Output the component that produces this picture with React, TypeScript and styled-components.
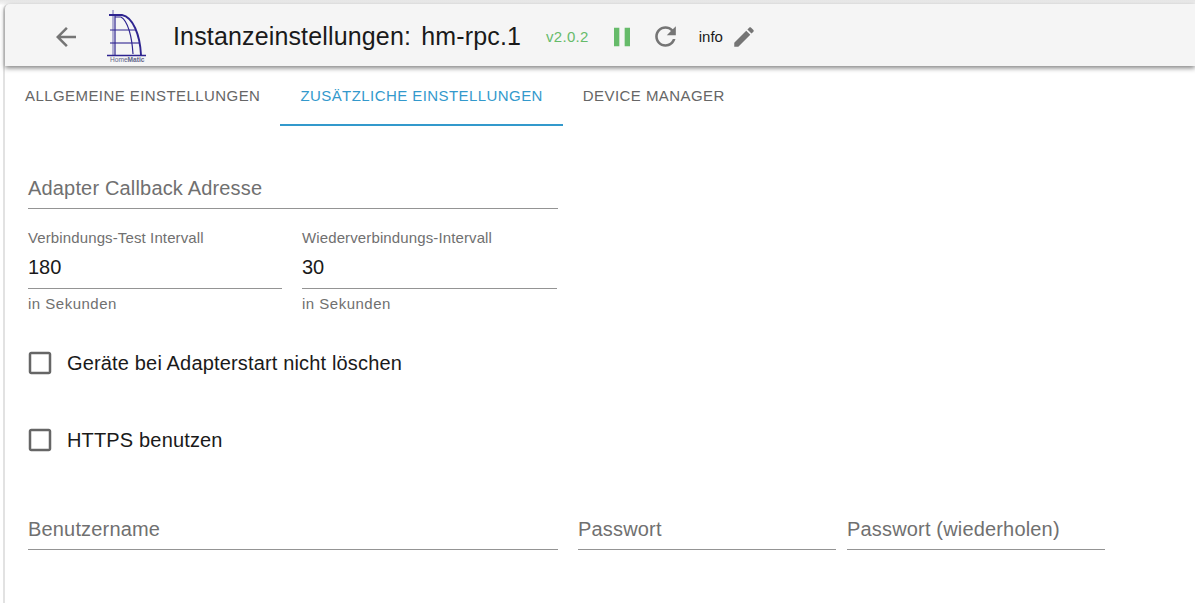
import styled, { createGlobalStyle } from "styled-components";
import { useState } from "react";

const GlobalStyle = createGlobalStyle`
    html, body {
        margin: 0;
        height: 100%;
        background: #ffffff;
        overflow: hidden;
    }
    body {
        font-family: "Liberation Sans", Arial, sans-serif;
    }
`;

const Frame = styled.div`
    width: 1195px;
    height: 603px;
    box-sizing: border-box;
    padding: 4px 0 0 3px;
    background: linear-gradient(#e6e6e6, #f4f4f4 4px, #ffffff 5px);
    overflow: hidden;
`;

const Panel = styled.div`
    height: 100%;
    background: #ffffff;
    border-left: 2px solid #e2e2e2;
    border-top-left-radius: 6px;
`;

const Header = styled.header`
    height: 62px;
    box-sizing: border-box;
    padding-top: 3px;
    display: flex;
    align-items: center;
    background: #f5f5f5;
    border-top-left-radius: 5px;
    box-shadow: 0 2px 5px rgba(0, 0, 0, 0.5);
    position: relative;
`;

const BackButton = styled.div`
    width: 30px;
    height: 30px;
    margin-left: 46px;
    color: #757575;
    flex: none;
`;

const Logo = styled.svg`
    width: 42px;
    height: 55px;
    margin-left: 25px;
    flex: none;
`;

const LogoText = styled.text`
    font-size: 6.6px;
    font-family: "Liberation Sans", Arial, sans-serif;
    fill: #5f6488;
`;

const Title = styled.h1`
    margin: 0 0 0 25px;
    font-size: 25px;
    font-weight: 400;
    letter-spacing: 0.15px;
    word-spacing: -2px;
    color: #1a1a1a;
    white-space: pre;
`;

const Version = styled.span`
    margin-left: 25px;
    font-size: 15px;
    letter-spacing: 0.3px;
    color: #66bb6a;
`;

const PauseIcon = styled.svg`
    width: 32px;
    height: 32px;
    margin-left: 17px;
    color: #66bb6a;
    flex: none;
`;

const GreyIcon = styled.svg<{ $size: number; $gap: number }>`
    width: ${(p) => p.$size}px;
    height: ${(p) => p.$size}px;
    margin-left: ${(p) => p.$gap}px;
    color: #757575;
    flex: none;
`;

const Host = styled.span`
    margin-left: 18px;
    font-size: 15px;
    color: #1a1a1a;
`;

const Tabs = styled.nav`
    display: flex;
    height: 60px;
`;

const Tab = styled.button<{ $active?: boolean }>`
    appearance: none;
    background: none;
    border: 0;
    padding: 1px 20px 0;
    height: 60px;
    font-family: inherit;
    font-size: 15px;
    letter-spacing: 0.43px;
    text-transform: uppercase;
    color: ${(p) => (p.$active ? "#3399cc" : "#666666")};
    border-bottom: 2px solid ${(p) => (p.$active ? "#3399cc" : "transparent")};
    box-sizing: border-box;
    cursor: pointer;
`;

const Form = styled.main`
    padding: 39px 0 0 23px;
    display: flex;
    flex-direction: column;
`;

const Row = styled.div<{ $gap?: number; $top?: number }>`
    display: flex;
    gap: ${(p) => p.$gap ?? 20}px;
    margin-top: ${(p) => p.$top ?? 0}px;
`;

const Field = styled.div<{ $width: number }>`
    width: ${(p) => p.$width}px;
    display: flex;
    flex-direction: column;
`;

const Underlined = styled.div`
    border-bottom: 1px solid #949494;
    box-sizing: border-box;
`;

const EmptyInput = styled(Underlined)`
    height: 44px;
    padding-top: 12px;
    font-size: 20px;
    line-height: 23px;
    letter-spacing: 0.17px;
    color: #707070;
`;

const SmallLabel = styled.label`
    font-size: 15px;
    line-height: 18px;
    height: 18px;
    letter-spacing: 0.12px;
    color: #707070;
`;

const ValueInput = styled(Underlined)`
    height: 42px;
    padding-top: 9px;
    font-size: 20px;
    line-height: 23px;
    color: #1a1a1a;
`;

const Helper = styled.span`
    margin-top: 6px;
    font-size: 15px;
    line-height: 18px;
    letter-spacing: 0.5px;
    color: #707070;
`;

const CheckRow = styled.label<{ $top: number }>`
    display: flex;
    align-items: center;
    gap: 12px;
    height: 30px;
    margin-top: ${(p) => p.$top}px;
    cursor: pointer;
    font-size: 20px;
    letter-spacing: 0.16px;
    color: #1a1a1a;
`;

const CheckIcon = styled.svg`
    width: 30px;
    height: 30px;
    margin-left: -3px;
    color: #666666;
    flex: none;
`;

function CheckOption({ top, label }: { top: number; label: string }) {
    const [checked, setChecked] = useState(false);
    return (
        <CheckRow $top={top} onClick={() => setChecked(!checked)}>
            <CheckIcon viewBox="0 0 24 24" fill="currentColor">
                {checked ? (
                    <path d="M19 3H5c-1.11 0-2 .9-2 2v14c0 1.1.89 2 2 2h14c1.11 0 2-.9 2-2V5c0-1.1-.89-2-2-2zm-9 14l-5-5 1.41-1.41L10 14.17l7.59-7.59L19 8l-9 9z" />
                ) : (
                    <path d="M19 5v14H5V5h14m0-2H5c-1.1 0-2 .9-2 2v14c0 1.1.9 2 2 2h14c1.1 0 2-.9 2-2V5c0-1.1-.9-2-2-2z" />
                )}
            </CheckIcon>
            {label}
        </CheckRow>
    );
}

export default function App() {
    return (
        <Frame>
            <GlobalStyle />
            <Panel>
                <Header>
                    <BackButton>
                        <svg viewBox="0 0 24 24" width="30" height="30" fill="currentColor">
                            <path d="M20 11H7.83l5.59-5.59L12 4l-8 8 8 8 1.41-1.41L7.83 13H20v-2z" />
                        </svg>
                    </BackButton>
                    <Logo viewBox="0 0 42 55">
                        <g fill="none" stroke="#2e2490">
                            <path d="M7 1V46" strokeWidth="1" stroke="#6f69b2" />
                            <path d="M9 6V46" strokeWidth="1.2" />
                            <path d="M3 6H16C27 8 34 26 35 46" strokeWidth="1.9" />
                            <path d="M9 8H15C22 12 26 28 27 45" strokeWidth="1.2" />
                            <path d="M4 21H30" strokeWidth="1" />
                            <path d="M4 34H33" strokeWidth="1.1" />
                            <path d="M1 46.5H40" strokeWidth="1.6" />
                        </g>
                        <LogoText x="4" y="53">
                            Home<tspan fontWeight="700">Matic</tspan>
                        </LogoText>
                    </Logo>
                    <Title>Instanzeinstellungen:  hm-rpc.1</Title>
                    <Version>v2.0.2</Version>
                    <PauseIcon viewBox="0 0 24 24" fill="currentColor">
                        <path d="M6 19h4V5H6v14zm8-14v14h4V5h-4z" />
                    </PauseIcon>
                    <GreyIcon $size={31} $gap={12} viewBox="0 0 24 24" fill="currentColor">
                        <path d="M17.65 6.35C16.2 4.9 14.21 4 12 4c-4.42 0-7.99 3.58-7.99 8s3.57 8 7.99 8c3.73 0 6.84-2.55 7.73-6h-2.08c-.82 2.33-3.04 4-5.65 4-3.31 0-6-2.69-6-6s2.69-6 6-6c1.66 0 3.14.69 4.22 1.78L13 11h7V4l-2.35 2.35z" />
                    </GreyIcon>
                    <Host>info</Host>
                    <GreyIcon $size={26} $gap={8} viewBox="0 0 24 24" fill="currentColor">
                        <path d="M3 17.25V21h3.75L17.81 9.94l-3.75-3.75L3 17.25zM20.71 7.04c.39-.39.39-1.02 0-1.41l-2.34-2.34c-.39-.39-1.02-.39-1.41 0l-1.83 1.83 3.75 3.75 1.83-1.83z" />
                    </GreyIcon>
                </Header>
                <Tabs>
                    <Tab>Allgemeine Einstellungen</Tab>
                    <Tab $active>Zusätzliche Einstellungen</Tab>
                    <Tab>Device Manager</Tab>
                </Tabs>
                <Form>
                    <Field $width={530}>
                        <EmptyInput>Adapter Callback Adresse</EmptyInput>
                    </Field>
                    <Row $top={20}>
                        <Field $width={254}>
                            <SmallLabel>Verbindungs-Test Intervall</SmallLabel>
                            <ValueInput>180</ValueInput>
                            <Helper>in Sekunden</Helper>
                        </Field>
                        <Field $width={255}>
                            <SmallLabel>Wiederverbindungs-Intervall</SmallLabel>
                            <ValueInput>30</ValueInput>
                            <Helper>in Sekunden</Helper>
                        </Field>
                    </Row>
                    <CheckOption top={35} label="Geräte bei Adapterstart nicht löschen" />
                    <CheckOption top={47} label="HTTPS benutzen" />
                    <Row $top={51}>
                        <Field $width={530}>
                            <EmptyInput>Benutzername</EmptyInput>
                        </Field>
                        <Row $gap={11}>
                            <Field $width={258}>
                                <EmptyInput>Passwort</EmptyInput>
                            </Field>
                            <Field $width={258}>
                                <EmptyInput>Passwort (wiederholen)</EmptyInput>
                            </Field>
                        </Row>
                    </Row>
                </Form>
            </Panel>
        </Frame>
    );
}
